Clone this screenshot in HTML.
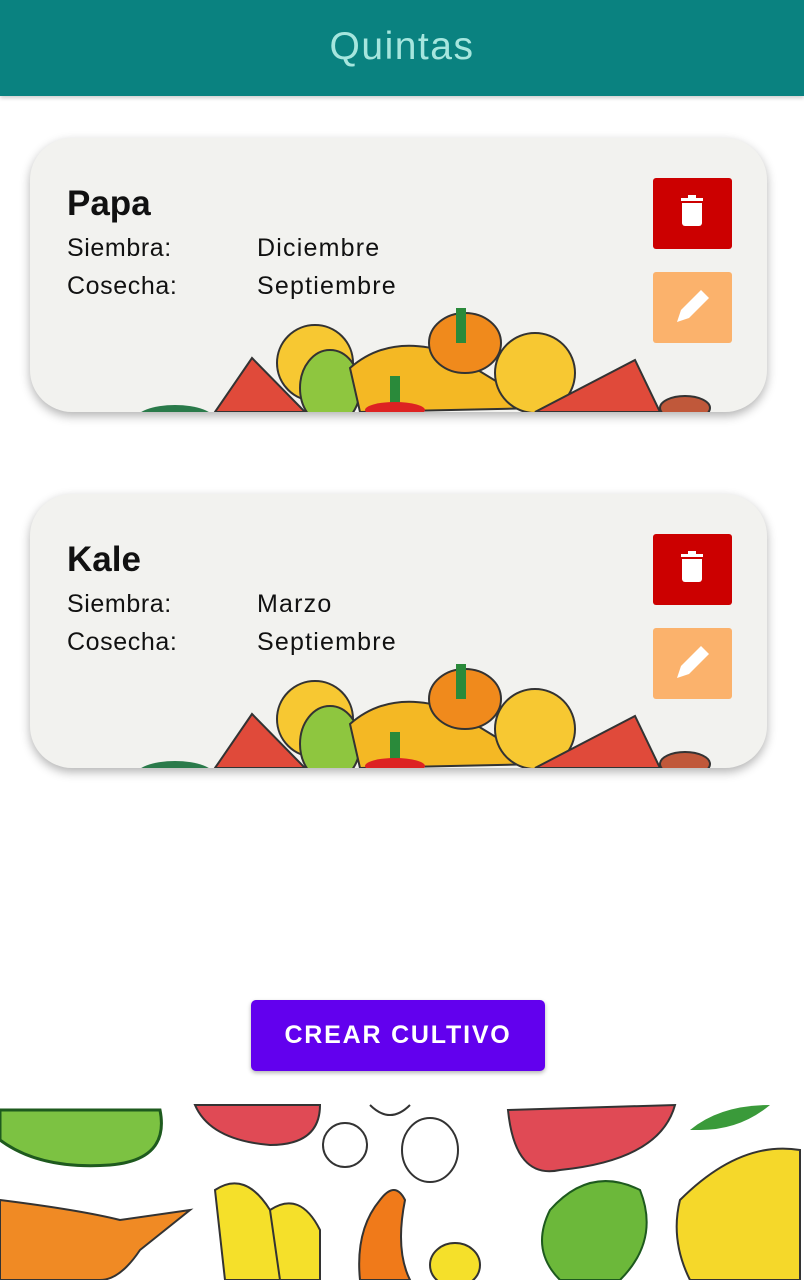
<!DOCTYPE html>
<html><head><meta charset="utf-8"><style>
*{margin:0;padding:0;box-sizing:border-box}
body{width:804px;height:1280px;background:#fff;font-family:"Liberation Sans",sans-serif;position:relative;overflow:hidden}
.hdr{position:absolute;left:0;top:0;width:804px;height:96px;background:#0a8280;color:#a6e6de;font-size:39px;letter-spacing:1.5px;text-align:center;line-height:94px;box-shadow:0 2px 4px rgba(0,0,0,.2)}
.card{position:absolute;left:30px;width:737px;height:274px;border-radius:42px;background:#f2f2ef;overflow:hidden;box-shadow:0 4px 10px rgba(0,0,0,.3)}
.t{position:absolute;left:37px;top:46px;font-size:35px;font-weight:bold;color:#111}
.r{position:absolute;left:37px;font-size:25px;color:#111;letter-spacing:0.6px}
.v{position:absolute;left:227px;font-size:25px;color:#111;letter-spacing:1.2px}
.del{position:absolute;left:623px;top:40px;width:79px;height:71px;background:#cc0000;border-radius:3px}
.ed{position:absolute;left:623px;top:134px;width:79px;height:71px;background:#fbb26c;border-radius:3px}
.fr{position:absolute;left:0;top:0}
.btn{position:absolute;left:251px;top:1000px;width:294px;height:71px;background:#6200ee;border-radius:5px;color:#fff;font-size:25px;font-weight:bold;letter-spacing:1.8px;text-align:center;line-height:71px;box-shadow:0 2px 4px rgba(0,0,0,.3)}
.bot{position:absolute;left:0;top:1100px;width:804px;height:180px}
</style></head><body>
<div class="hdr">Quintas</div>

<div class="card" style="top:138px">
<svg class="fr" width="737" height="274">
<g>
<ellipse cx="145" cy="282" rx="40" ry="15" fill="#2a7a4a"/>
<polygon points="185,274 222,220 275,274" fill="#e04a3a" stroke="#333" stroke-width="2"/>
<circle cx="285" cy="225" r="38" fill="#f7c832" stroke="#333" stroke-width="2"/>
<ellipse cx="300" cy="250" rx="30" ry="38" fill="#8ec63f" stroke="#333" stroke-width="2"/>
<path d="M320 230 Q360 195 420 215 L510 270 L330 274 Z" fill="#f4b824" stroke="#333" stroke-width="2"/>
<ellipse cx="435" cy="205" rx="36" ry="30" fill="#f08a1c" stroke="#333" stroke-width="2"/>
<rect x="426" y="170" width="10" height="35" fill="#2a8a3a"/>
<circle cx="505" cy="235" r="40" fill="#f7c832" stroke="#333" stroke-width="2"/>
<polygon points="505,274 605,222 630,274" fill="#e04a3a" stroke="#333" stroke-width="2"/>
<ellipse cx="655" cy="270" rx="25" ry="12" fill="#c0583a" stroke="#333" stroke-width="2"/>
<rect x="360" y="238" width="10" height="36" fill="#2a8a3a"/>
<ellipse cx="365" cy="272" rx="30" ry="8" fill="#d22"/>
</g></svg>
<div class="t">Papa</div>
<div class="r" style="top:96px">Siembra:</div><div class="v" style="top:96px">Diciembre</div>
<div class="r" style="top:134px">Cosecha:</div><div class="v" style="top:134px">Septiembre</div>
<div class="del"><svg width="79" height="71"><rect x="28" y="20" width="22" height="3" fill="#fff"/><rect x="35" y="17" width="8" height="3" fill="#fff"/><path d="M29 25h20v20a3 3 0 0 1-3 3h-14a3 3 0 0 1-3-3z" fill="#fff"/></svg></div>
<div class="ed"><svg width="79" height="71"><path d="M24 50l4-12 20-20 8 8-20 20z" fill="#fff"/></svg></div>
</div>

<div class="card" style="top:494px">
<svg class="fr" width="737" height="274">
<g>
<ellipse cx="145" cy="282" rx="40" ry="15" fill="#2a7a4a"/>
<polygon points="185,274 222,220 275,274" fill="#e04a3a" stroke="#333" stroke-width="2"/>
<circle cx="285" cy="225" r="38" fill="#f7c832" stroke="#333" stroke-width="2"/>
<ellipse cx="300" cy="250" rx="30" ry="38" fill="#8ec63f" stroke="#333" stroke-width="2"/>
<path d="M320 230 Q360 195 420 215 L510 270 L330 274 Z" fill="#f4b824" stroke="#333" stroke-width="2"/>
<ellipse cx="435" cy="205" rx="36" ry="30" fill="#f08a1c" stroke="#333" stroke-width="2"/>
<rect x="426" y="170" width="10" height="35" fill="#2a8a3a"/>
<circle cx="505" cy="235" r="40" fill="#f7c832" stroke="#333" stroke-width="2"/>
<polygon points="505,274 605,222 630,274" fill="#e04a3a" stroke="#333" stroke-width="2"/>
<ellipse cx="655" cy="270" rx="25" ry="12" fill="#c0583a" stroke="#333" stroke-width="2"/>
<rect x="360" y="238" width="10" height="36" fill="#2a8a3a"/>
<ellipse cx="365" cy="272" rx="30" ry="8" fill="#d22"/>
</g></svg>
<div class="t">Kale</div>
<div class="r" style="top:96px">Siembra:</div><div class="v" style="top:96px">Marzo</div>
<div class="r" style="top:134px">Cosecha:</div><div class="v" style="top:134px">Septiembre</div>
<div class="del"><svg width="79" height="71"><rect x="28" y="20" width="22" height="3" fill="#fff"/><rect x="35" y="17" width="8" height="3" fill="#fff"/><path d="M29 25h20v20a3 3 0 0 1-3 3h-14a3 3 0 0 1-3-3z" fill="#fff"/></svg></div>
<div class="ed"><svg width="79" height="71"><path d="M24 50l4-12 20-20 8 8-20 20z" fill="#fff"/></svg></div>
</div>

<div class="btn">CREAR CULTIVO</div>

<svg class="bot" width="804" height="180">
<rect width="804" height="180" fill="#fff"/>
<path d="M0 10 L160 10 Q170 60 110 65 Q40 70 0 40 Z" fill="#7cc242" stroke="#1e5a1e" stroke-width="3"/>
<path d="M195 5 L320 5 Q320 45 270 45 Q210 40 195 5 Z" fill="#e04a55" stroke="#333" stroke-width="2"/>
<g fill="none" stroke="#333" stroke-width="2"><ellipse cx="345" cy="45" rx="22" ry="22"/><ellipse cx="430" cy="50" rx="28" ry="32"/><path d="M370 5 q20 20 40 0"/></g>
<path d="M508 10 L675 5 Q660 60 560 70 Q515 80 508 10 Z" fill="#e04a55" stroke="#333" stroke-width="2"/>
<path d="M690 30 Q720 5 770 5 Q740 30 700 30 Z" fill="#3a9a3a"/>
<path d="M0 100 Q80 110 120 120 L190 110 L140 150 Q120 180 100 180 L0 180 Z" fill="#f08a24" stroke="#333" stroke-width="2"/>
<path d="M215 90 Q245 70 270 110 L300 180 L225 180 Z" fill="#f5e02a" stroke="#333" stroke-width="2"/>
<path d="M270 110 Q300 90 320 130 L320 180 L280 180 Z" fill="#f5e02a" stroke="#333" stroke-width="2"/>
<path d="M380 100 Q395 80 405 100 Q395 150 410 180 L360 180 Q355 130 380 100 Z" fill="#f07a1a" stroke="#333" stroke-width="2"/>
<ellipse cx="455" cy="165" rx="25" ry="22" fill="#f5e02a" stroke="#333" stroke-width="2"/>
<path d="M550 110 Q590 65 640 90 Q660 140 620 180 L560 180 Q530 150 550 110 Z" fill="#6cb83a" stroke="#1e5a1e" stroke-width="2"/>
<path d="M680 100 Q740 40 800 50 L800 180 L690 180 Q670 140 680 100 Z" fill="#f5d82a" stroke="#333" stroke-width="2"/>
</svg>
</body></html>
